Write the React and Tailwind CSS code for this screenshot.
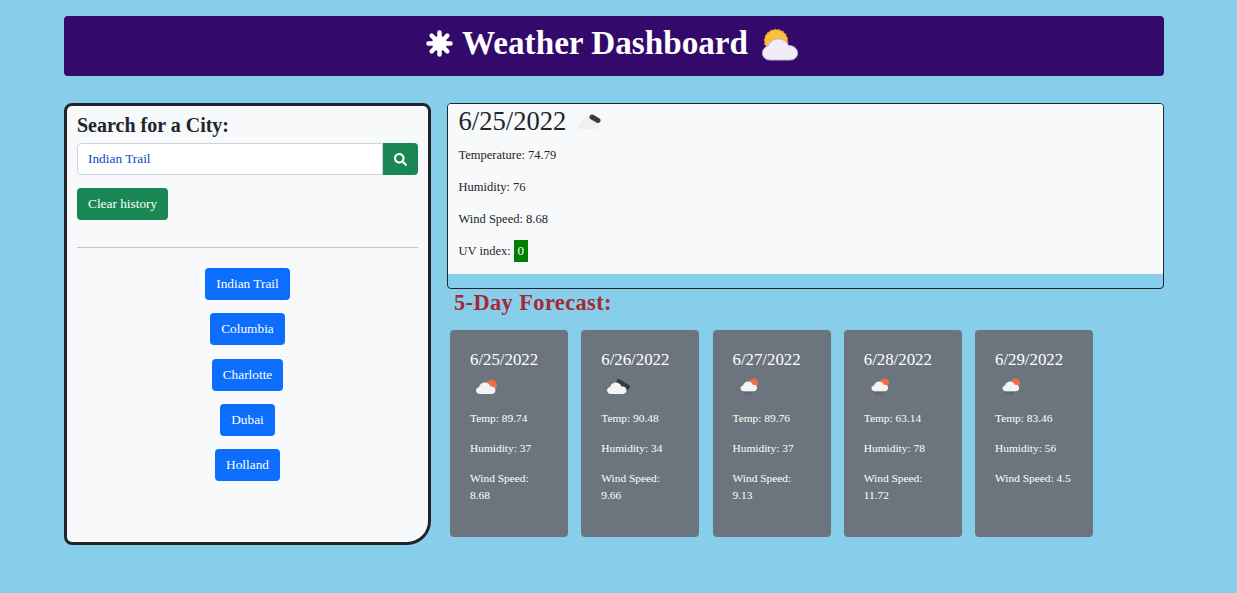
import React from 'react';
import { FaSearch } from 'react-icons/fa';

const history = ['Indian Trail', 'Columbia', 'Charlotte', 'Dubai', 'Holland'];

const forecast = [
  { date: '6/25/2022', temp: '89.74', humidity: '37', wind: '8.68', icon: 'sun' },
  { date: '6/26/2022', temp: '90.48', humidity: '34', wind: '9.66', icon: 'dark' },
  { date: '6/27/2022', temp: '89.76', humidity: '37', wind: '9.13', icon: 'rain' },
  { date: '6/28/2022', temp: '63.14', humidity: '78', wind: '11.72', icon: 'rain' },
  { date: '6/29/2022', temp: '83.46', humidity: '56', wind: '4.5', icon: 'rain' },
];

const CLOUD = 'M4 12C1.700 12 0 10.500 0 8.600 0 6.800 1.300 5.500 3 5.300 3.500 2.500 6 .5 9 .5c2.700 0 4.900 1.700 5.500 4.100.4-.1.8-.1 1.200-.1 2.200 0 3.800 1.500 3.800 3.700 0 2.200-1.700 3.800-3.900 3.800z';

const SunGlyph = () => (
  <svg width="27" height="27" viewBox="0 0 27 27" fill="none" className="shrink-0">
    <circle cx="13.500" cy="13.500" r="7.500" fill="#fff" />
    <g stroke="#fff" strokeWidth="4.500" strokeLinecap="round">
      <path d="M13.500 2.500v4M13.500 20.500v4M2.500 13.500h4M20.500 13.500h4M5.700 5.700l2.800 2.800M18.500 18.500l2.800 2.800M5.700 21.300l2.800-2.800M18.500 8.500l2.800-2.800" />
    </g>
  </svg>
);

const HeaderCloud = () => (
  <svg width="36" height="33" viewBox="0 0 36 33" className="shrink-0">
    <circle cx="14" cy="13" r="11.500" fill="#fbc13c" stroke="#f08a24" strokeWidth="1.500" strokeDasharray="2 2" />
    <path
      d="M8 32c-4.500 0-7.500-3-7.500-7 0-3.500 2.500-6 5.500-7C8 13.500 12 11 16 11c5 0 9 2.500 10.500 6.500 5 0 9 3 9 7.500 0 4-3 7-7.500 7z"
      fill="#f1ecf8"
      stroke="#bdb6cc"
      strokeWidth="1"
    />
  </svg>
);

const WeatherIcon = ({ kind }) => (
  <svg width="28" height="20" viewBox="0 0 28 20">
    {kind === 'sun' && <circle cx="18.500" cy="8" r="5.500" fill="#f26b42" />}
    {kind === 'dark' && <path d="M15 5l8 5" stroke="#3a3a3a" strokeWidth="5.500" strokeLinecap="round" />}
    {kind === 'rain' && <circle cx="17.500" cy="6" r="4.500" fill="#f26b42" />}
    {kind === 'rain' ? (
      <g>
        <path d={CLOUD} transform="translate(4.500 4) scale(.85)" fill="#f4f4f4" />
        <path d="M9 15l-1 3M12 15l-1 3M15 15l-1 3" stroke="#4a4a4a" strokeWidth="1" strokeDasharray="1.500 1" />
      </g>
    ) : (
      <path d={CLOUD} transform="translate(3 5)" fill="#f4f4f4" />
    )}
  </svg>
);

const CurrentIcon = () => (
  <svg width="24" height="18" viewBox="0 0 24 18">
    <path d={CLOUD} transform="translate(1 3) scale(1.100)" fill="#f0f0f1" />
    <path d="M15 4l6 3.500" stroke="#3c3c3c" strokeWidth="5" strokeLinecap="round" />
  </svg>
);

const ForecastCard = ({ item }) => (
  <div className="w-[118px] h-[207px] shrink-0 bg-[#6c757d] rounded-[4px] text-white pt-[20px] px-5">
    <h5 className="text-[16.800px] leading-5">{item.date}</h5>
    <div className="mt-[7px] ml-[3px] h-[20px]">
      <WeatherIcon kind={item.icon} />
    </div>
    <p className="mt-[13px] text-[11.400px] leading-[17px]">Temp: {item.temp}</p>
    <p className="mt-[13px] text-[11.400px] leading-[17px]">Humidity: {item.humidity}</p>
    <p className="mt-[13px] text-[11.400px] leading-[17px]">Wind Speed: {item.wind}</p>
  </div>
);

export default function App() {
  return (
    <div className="min-h-[593px] bg-[#87ceeb] font-['Liberation_Serif',serif] text-[#212529] pt-4 pl-16 w-[1237px]">
      <div className="w-[1100px]">
        <header className="h-[60px] bg-[#330a6b] rounded-[4px] flex items-center justify-center gap-[9px] text-white pb-[6px] pr-1">
          <SunGlyph />
          <h1 className="text-[33.200px] leading-none font-bold">Weather Dashboard</h1>
          <span className="ml-[5px] mt-[2px]"><HeaderCloud /></span>
        </header>

        <div className="flex mt-[27px]">
          <aside className="w-[367px] h-[442px] shrink-0 bg-[#f8f9fa] border-[3px] border-[#212529] rounded-[8px] rounded-br-[24px] px-[10px] pt-[7px]">
            <h2 className="text-[20px] leading-6 font-bold">Search for a City:</h2>
            <div className="flex mt-[6px] h-[32px]">
              <input
                readOnly
                value="Indian Trail"
                className="flex-1 min-w-0 h-full bg-white border border-[#ced4da] rounded-l-[4px] px-[10px] text-[13.333px] text-[#0d47c9] outline-none"
              />
              <button className="w-[35px] h-full bg-[#198754] text-white rounded-r-[4px] flex items-center justify-center">
                <FaSearch size={13} />
              </button>
            </div>
            <button className="block mt-[13px] h-[32px] px-[11px] bg-[#198754] text-white rounded-[4px] text-[13.333px]">
              Clear history
            </button>
            <hr className="mt-[27px] border-t border-[#c4c6c9]" />
            <div className="flex flex-col items-center mt-[20px] gap-[13.250px]">
              {history.map((city) => (
                <button key={city} className="h-[32px] px-[11px] bg-[#0d6efd] text-white rounded-[4px] text-[13.333px]">
                  {city}
                </button>
              ))}
            </div>
          </aside>

          <main className="flex-1 ml-4">
            <section className="h-[186px] border border-[#212529] rounded-[4px] overflow-hidden">
              <div className="h-[170px] bg-[#f8f9fa] px-[10.500px]">
                <div className="flex items-center h-[33px]">
                  <h3 className="text-[26.600px] leading-8">6/25/2022</h3>
                  <span className="ml-[11px] mt-[2px]"><CurrentIcon /></span>
                </div>
                <div className="text-[12.500px] leading-[18px] mt-[9px] flex flex-col gap-[14px]">
                  <p>Temperature: 74.79</p>
                  <p>Humidity: 76</p>
                  <p>Wind Speed: 8.68</p>
                  <p className="flex items-center h-[18px]">
                    UV index:
                    <span className="ml-[3px] w-[14px] h-[22px] bg-[#008000] text-white text-center leading-[22px] text-[13px]">0</span>
                  </p>
                </div>
              </div>
            </section>
            <h2 className="ml-[7px] text-[22.400px] leading-[28px] font-bold tracking-[0.4px] text-[#a52834]">5-Day Forecast:</h2>
            <div className="flex gap-[13.250px] ml-[3px] mt-[13px]">
              {forecast.map((item) => (
                <ForecastCard key={item.date} item={item} />
              ))}
            </div>
          </main>
        </div>
      </div>
    </div>
  );
}
